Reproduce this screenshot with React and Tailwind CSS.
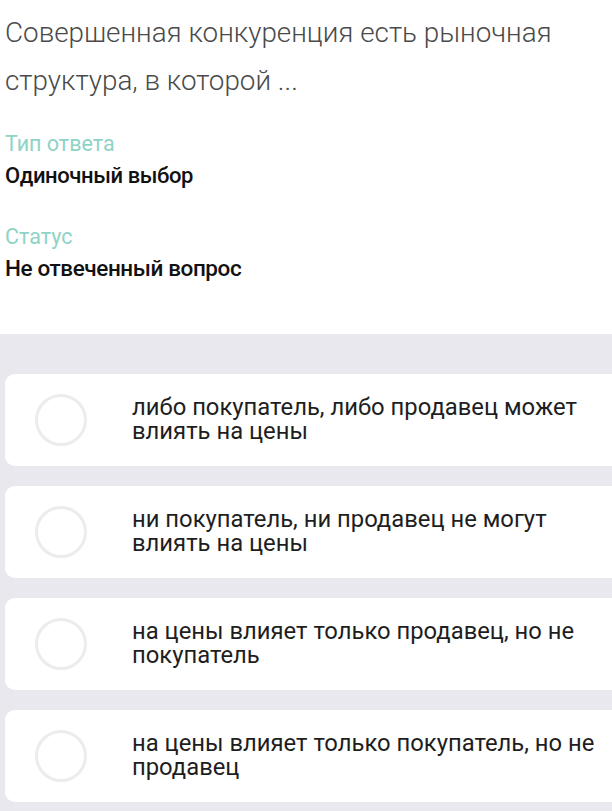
import React from 'react';

const options = [
  'либо покупатель, либо продавец может влиять на цены',
  'ни покупатель, ни продавец не могут влиять на цены',
  'на цены влияет только продавец, но не покупатель',
  'на цены влияет только покупатель, но не продавец',
];

const App = () => {
  return (
    <div className="w-[612px] h-[811px] overflow-hidden bg-white font-['Roboto',sans-serif]">
      {/* Question header */}
      <div className="px-[5px] pt-[9px] h-[334px]">
        <p className="text-[27.8px] leading-[48px] font-light text-[#4a4a4a] w-[600px]">
          Совершенная конкуренция есть рыночная структура, в которой ...
        </p>
        <div className="mt-[26px]">
          <div className="text-[21.5px] leading-[26px] text-[#8fd3c6]">Тип ответа</div>
          <div className="mt-[6px] text-[22px] leading-[26px] font-medium text-[#111] tracking-[-0.4px]">Одиночный выбор</div>
        </div>
        <div className="mt-[35px]">
          <div className="text-[21.5px] leading-[26px] text-[#8fd3c6]">Статус</div>
          <div className="mt-[5px] text-[22.5px] leading-[26px] font-medium text-[#111] tracking-[-0.4px]">Не отвеченный вопрос</div>
        </div>
      </div>

      {/* Options */}
      <div className="bg-[#e9e8ee] pt-[40px] pl-[5px] flex flex-col gap-[20px] h-[477px]">
        {options.map((text) => (
          <div key={text} className="bg-white rounded-l-[10px] h-[92px] flex items-center">
            <div className="w-[52px] h-[52px] rounded-full border-[3px] border-[#ececec] ml-[30px] shrink-0" />
            <div className="ml-[45px] pr-[8px] text-[23.8px] leading-[24px] text-[#1e1e1e] -mt-[2px]">
              {text}
            </div>
          </div>
        ))}
      </div>
    </div>
  );
};

export default App;
